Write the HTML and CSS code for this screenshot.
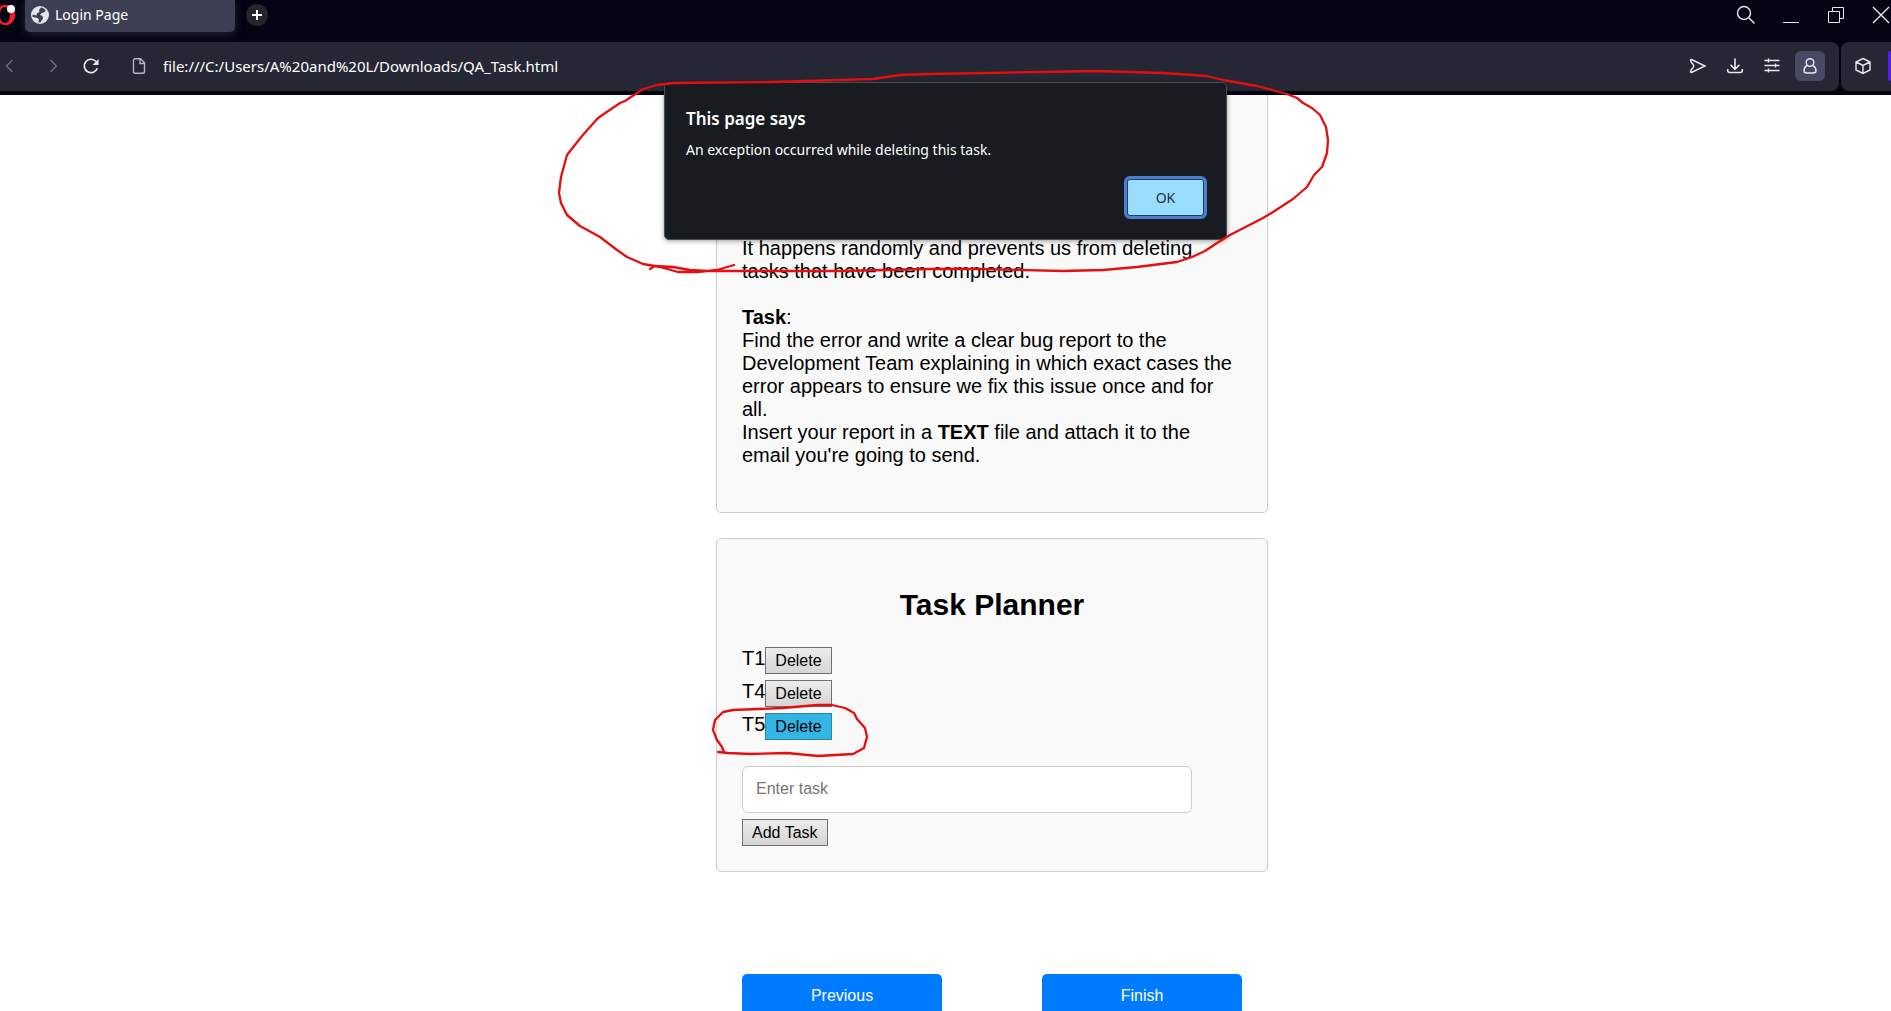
FILE: index.html
```html
<!DOCTYPE html>
<html lang="en">
<head>
<meta charset="utf-8">
<title>Login Page</title>
<link rel="stylesheet" href="styles.css">
</head>
<body>
<header class="browser">
  <div class="tabs">
    <svg class="opera" width="16" height="26" viewBox="0 0 16 26"><path fill="#ff1b2d" fill-rule="evenodd" d="M4 5C11 4 15 9 15 15s-4 11-11 10c-5-1-7-5-7-10S-1 6 4 5zM5 7C2 7 0 10 0 15s2 8 5 8 5-3 5-8-2-8-5-8z"/><circle cx="11" cy="9" r="4" fill="#fff"/></svg>
    <div class="tab">
      <svg width="18" height="18" viewBox="0 0 18 18"><circle cx="9" cy="9" r="9" fill="#e4e5ec"/><path fill="#3d3f55" d="M10 1.500c2 .3 3.500 1.300 4.700 2.700L13 6.500l-2.500.5L9 9l2.500 1 .5 2.500-2.500 3.700-2.200.3.700-3-2-1.800-4.300-.7L1.500 8.500l4 1 .5-2.300L8.500 6l-.5-2z"/></svg>
      <span>Login Page</span>
    </div>
    <button class="new-tab" aria-label="New tab"><svg width="10" height="10" viewBox="0 0 10 10"><path d="M5 0v10M0 5h10" stroke="#fff" stroke-width="2"/></svg></button>
    <div class="window-tools">
      <button aria-label="Search tabs"><svg width="20" height="20" viewBox="0 0 20 20"><circle cx="8" cy="8" r="6.500"/><path d="M13 13l5.500 5.500"/></svg></button>
      <button aria-label="Minimize"><svg width="20" height="20" viewBox="0 0 20 20"><path stroke-width="1" d="M2 17.500h16"/></svg></button>
      <button aria-label="Restore"><svg width="20" height="20" viewBox="0 0 20 20"><path stroke-width="1" d="M2.500 6.500h11v11h-11zM6.500 6.500v-4h11v11h-4"/></svg></button>
      <button aria-label="Close"><svg width="20" height="20" viewBox="0 0 20 20"><path d="M2 2l16 16M18 2L2 18"/></svg></button>
    </div>
  </div>
  <div class="toolbar">
    <nav class="address-bar">
      <button class="dim" aria-label="Back"><svg width="20" height="20" viewBox="0 0 20 20"><path d="M12.500 4l-6 6 6 6"/></svg></button>
      <button class="dim" aria-label="Forward"><svg width="20" height="20" viewBox="0 0 20 20"><path d="M7.500 4l6 6-6 6"/></svg></button>
      <button aria-label="Reload"><svg width="20" height="20" viewBox="0 0 20 20"><path stroke-width="1.700" d="M16.300 12.200A6.700 6.700 0 1 1 15 5.500"/><path fill="#e8e9ef" stroke="none" d="M17.500 3v6h-6z"/></svg></button>
      <svg class="page-icon" width="20" height="20" viewBox="0 0 20 20"><path d="M5 2.700h6.500l4 4V15.500a1.800 1.800 0 0 1-1.800 1.800H6.300A1.800 1.800 0 0 1 4.500 15.500V4.500A1.800 1.800 0 0 1 6.300 2.700M11 3v4.500h4.500"/></svg>
      <input class="address" aria-label="Address" value="file:///C:/Users/A%20and%20L/Downloads/QA_Task.html">
      <div class="actions">
        <button aria-label="Send"><svg width="20" height="20" viewBox="0 0 20 20"><path d="M3.500 3.500l13.500 6.500-13.500 6.500c-1.500 0-1-1.500 0-3l1.700-2c.8-1 .8-2 0-3l-1.700-2c-1-1.500-1.500-3 0-3z"/></svg></button>
        <button aria-label="Downloads"><svg width="20" height="20" viewBox="0 0 20 20"><path stroke-width="1.600" d="M10 2.500v10.500M5.500 8.800l4.500 4.500 4.500-4.500M2.700 13v1.500a2 2 0 0 0 2 2h10.600a2 2 0 0 0 2-2V13"/></svg></button>
        <button aria-label="Easy setup"><svg width="20" height="20" viewBox="0 0 20 20"><path d="M2.500 4.500h15M2.500 9.500h15M2.500 14.500h15M6.500 2.500v4M13.500 7.500v4M6.500 12.500v4"/></svg></button>
        <button class="profile" aria-label="Profile"><svg width="20" height="20" viewBox="0 0 20 20"><circle cx="10" cy="6.500" r="3.800"/><path d="M7.200 9.300C5 10.500 4 12 4 14.500 4 16 5 17 6.500 17h7c1.500 0 2.500-1 2.500-2.500 0-2.500-1-4-3.200-5.200"/></svg></button>
      </div>
    </nav>
    <div class="extras">
      <button aria-label="Extensions"><svg width="20" height="20" viewBox="0 0 20 20"><path d="M10 2.500l7 3.500v8l-7 3.500-7-3.500V6zM3 6l7 3.500L17 6M10 9.500v8"/></svg></button>
      <span class="aria"></span>
    </div>
  </div>
</header>

<main class="page">
  <section class="card brief">
    <p>It happens randomly and prevents us from deleting tasks that have been completed.</p>
    <h2><b>Task</b>:</h2>
    <p>Find the error and write a clear bug report to the Development Team explaining in which exact cases the error appears to ensure we fix this issue once and for all.</p>
    <p>Insert your report in a <b>TEXT</b> file and attach it to the email you're going to send.</p>
  </section>
  <section class="card planner">
    <h1>Task Planner</h1>
    <ul class="tasks">
      <li>T1<button class="small">Delete</button></li>
      <li>T4<button class="small">Delete</button></li>
      <li>T5<button class="small active">Delete</button></li>
    </ul>
    <input class="entry" aria-label="Enter task" placeholder="Enter task">
    <button class="small">Add Task</button>
  </section>
  <div class="steps">
    <button>Previous</button>
    <button>Finish</button>
  </div>
</main>

<dialog class="alert" open aria-labelledby="alert-title">
  <h2 id="alert-title">This page says</h2>
  <p>An exception occurred while deleting this task.</p>
  <button>OK</button>
</dialog>

<svg class="marks" width="790" height="710" viewBox="550 60 790 710" aria-hidden="true">
  <path d="M650 269L655 266L673 267L690 270L707 271L740 271L793 271L840 271L930 269L980 269L1063 271L1103 270L1137 267L1177 262L1192 257L1205 251L1217 243L1230 235L1263 218L1273 212L1293 199L1307 187L1314 175L1322 167L1327 153L1328 140L1326 127L1320 115L1312 108L1303 103L1297 98L1287 94L1257 86L1223 80L1207 76L1163 73L1097 71L1040 72L930 74L900 75L873 79L773 82L673 83L657 85L643 89L625 101L620 103L598 118L582 136L567 155L561 177L559 193L561 203L567 215L580 226L600 237L617 250L627 257L643 264L660 267L678 272L697 272L717 270L734 265"/>
  <path d="M718 752L728 753L750 754L787 753L818 756L853 754L864 748L867 737L865 728L857 719L854 713L845 708L832 705L817 705L783 708L733 710L723 712L715 720L713 730L717 740L722 747L724 752"/>
</svg>
</body>
</html>
```
FILE: styles.css
```css
* { box-sizing: border-box; }

body {
  margin: 0;
  height: 100vh;
  display: flex;
  flex-direction: column;
  position: relative;
  overflow: hidden;
  background: #fff;
  font: 20px/23px "Liberation Sans", Arial, sans-serif;
  color: #000;
}

button, input { font: inherit; color: inherit; }

/* Browser window */
.browser {
  flex: none;
  background: #020412;
  color: #fff;
  font: 15px/20px "Noto Sans", "Segoe UI", sans-serif;
  padding-bottom: 4px;
}
.browser button {
  display: flex;
  align-items: center;
  justify-content: center;
  padding: 0;
  border: 0;
  background: none;
}
.browser svg { flex: none; }
.window-tools svg, .toolbar svg {
  fill: none;
  stroke: #e8e9ef;
  stroke-width: 1.4;
}
.tabs { display: flex; height: 42px; align-items: flex-start; }
.opera { margin-right: 9px; }
.tab {
  display: flex;
  align-items: center;
  gap: 6px;
  width: 210px;
  height: 32px;
  padding: 0 6px 2px;
  border-radius: 0 0 5px 5px;
  background: #3d3f55;
  box-shadow: 0 2px 8px #3d3f5590;
  font-size: 14px;
}
.browser .new-tab {
  width: 22px;
  height: 22px;
  margin: 4px 0 0 11px;
  border-radius: 50%;
  background: #24262d;
}
.window-tools { display: flex; gap: 25px; margin: 5px 0 0 auto; }

.toolbar { display: flex; gap: 2px; }
.address-bar, .extras {
  display: flex;
  align-items: center;
  height: 49px;
  padding-bottom: 2px;
  background: #252834;
}
.address-bar { flex: 1; border-radius: 0 8px 8px 0; padding-right: 14px; }
.address-bar > button { width: 38px; }
.address-bar > button:first-child { width: 20px; margin: 0 14px 0 0; }
.address-bar > button:nth-child(2) { margin-left: 0; }
.address-bar svg { display: block; }
.toolbar .dim svg { stroke: #6d7080; }
.toolbar .page-icon { margin: 0 14px 0 19px; stroke: #b4b6c2; }
.address { flex: 1; padding: 0; border: 0; background: none; }
.actions { display: flex; align-items: center; gap: 17px; }
.actions .profile {
  width: 30px;
  height: 30px;
  margin-left: -4px;
  border-radius: 6px;
  background: #484a63;
}
.extras { gap: 15px; padding-left: 12px; border-radius: 8px 0 0 8px; }
.aria { width: 3px; height: 30px; border-radius: 3px 0 0 3px; background: #5020ee; }

/* Page */
.page {
  flex: 1;
  min-height: 0;
  overflow: hidden;
  display: flex;
  flex-direction: column;
  align-items: center;
  padding-left: 93px;
}
.card {
  flex: none;
  width: 552px;
  padding: 25px;
  border: 1px solid #ccc;
  border-radius: 5px;
  background: #f9f9f9;
}
.brief {
  border-top: 0;
  border-radius: 0 0 5px 5px;
  padding-top: 142px;
  padding-bottom: 45px;
}
.brief p { margin: 0; }
.brief h2 { margin: 23px 0 0; font-size: 20px; line-height: 23px; font-weight: 400; }
.planner { margin-top: 25px; }
.planner h1 {
  margin: 24px 0 25px;
  text-align: center;
  font-size: 30px;
  line-height: 34px;
}
.tasks { margin: 0 0 20px; padding: 0; list-style: none; }
.tasks li { display: flex; height: 33px; align-items: flex-start; }
.small {
  display: block;
  height: 27px;
  padding: 0 9px;
  border: 1px solid #707070;
  background: linear-gradient(#ececec, #d5d5d5);
  font-size: 16px;
  line-height: 24px;
}
.small.active { border-color: #2b83a8; background: #33b5e5; }
.entry {
  display: block;
  width: 450px;
  max-width: 100%;
  height: 47px;
  margin-bottom: 6px;
  padding: 0 13px 2px;
  border: 1px solid #ccc;
  border-radius: 6px;
  background: #fff;
  font-size: 16px;
}
.entry::placeholder { color: #757575; }
.steps { flex: none; display: flex; gap: 100px; margin-top: 102px; }
.steps button {
  width: 200px;
  height: 43px;
  border: 0;
  border-radius: 5px;
  background: #007bff;
  color: #fff;
  font-size: 16px;
}

/* Alert over the page */
.alert {
  position: absolute;
  top: 82px;
  left: 0;
  right: 0;
  width: 563px;
  margin: 0 auto;
  padding: 24px 22px 23px 21px;
  display: flex;
  flex-direction: column;
  border: 1px solid #4b4e55;
  border-radius: 5px;
  background: #181b1f;
  box-shadow: 0 1px 5px #0006;
  color: #fff;
  font: 14px/20px "Noto Sans", "Segoe UI", sans-serif;
}
.alert h2 { margin: 0 0 9px; font-size: 17px; line-height: 24px; font-weight: 600; }
.alert p { margin: 0 0 19px; }
.alert button {
  align-self: flex-end;
  width: 77px;
  height: 37px;
  border: 0;
  border-radius: 3px;
  outline: 3px solid #4d7fd0;
  box-shadow: inset 0 0 0 1px #1c3b6b;
  background: #99ddff;
  color: #23303a;
}

/* Hand-drawn marks */
.marks {
  position: absolute;
  top: 60px;
  left: 50%;
  margin-left: -396px;
  pointer-events: none;
  fill: none;
  stroke: #e60e0e;
  stroke-width: 2.3;
  stroke-linejoin: round;
  stroke-linecap: round;
}
```
